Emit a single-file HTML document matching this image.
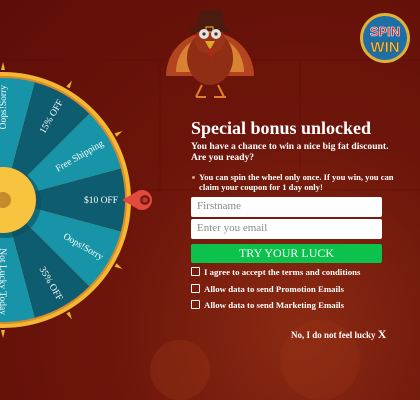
<!DOCTYPE html>
<html><head><meta charset="utf-8"><style>
*{margin:0;padding:0;box-sizing:border-box}
html,body{width:420px;height:400px;overflow:hidden}
body{position:relative;font-family:"Liberation Serif",serif;
background:radial-gradient(ellipse at 300px 330px,#8a2a12 0%,#6d150b 45%,#5e0e07 100%);color:#fff}
.abs{position:absolute}
h1{position:absolute;left:191px;top:118px;font-size:18px;font-weight:bold;white-space:nowrap}
.sub{left:191px;top:141px;font-size:9.6px;font-weight:bold;line-height:11px;white-space:nowrap}
.note{left:199px;top:172px;font-size:8.6px;font-weight:bold;line-height:10px;width:195px}
.note:before{content:"";position:absolute;left:-7px;top:4px;width:3px;height:3px;border-radius:50%;background:#d9a08a}
.inp{left:191px;width:191px;height:20px;background:#fff;border-radius:2px;color:#8a8a8a;font-size:11px;padding:3px 6px}
.btn{left:191px;top:244px;width:191px;height:19px;background:#0cc24d;border-radius:2px;text-align:center;font-size:12px;line-height:19px;color:#fff}
.cb{left:191px;font-size:8.8px;font-weight:bold;white-space:nowrap}
.cb i{display:inline-block;width:9px;height:9px;border:1.3px solid #fff;border-radius:1px;vertical-align:-1px;margin-right:4px}
.no{left:291px;top:327px;font-size:9px;font-weight:bold;white-space:nowrap}
</style></head><body>
<svg class="abs" style="left:0;top:0;display:block" width="420" height="400">
<g stroke="#5a0c06" stroke-width="1" opacity=".5" fill="none">
<path d="M0 60H420M0 190H420M160 60V190M300 60V190"/></g>
<circle cx="320" cy="360" r="40" fill="#9a3416" opacity=".35"/>
<circle cx="180" cy="370" r="30" fill="#a03a18" opacity=".3"/>
<g transform="translate(210,48)">
<path d="M-44 28 A44 44 0 0 1 44 28 Z" fill="#b4441f"/>
<path d="M-34 24 A34 36 0 0 1 34 24 Z" fill="#d88232"/>
<ellipse cx="0" cy="10" rx="23" ry="27" fill="#8f2d15"/>
<ellipse cx="0" cy="-8" rx="15" ry="14" fill="#9a3418"/>
<path d="M-15 -18 L15 -18 L12 -38 L-9 -38 Z" fill="#4a1c10"/>
<rect x="-20" y="-20" width="40" height="4" fill="#4a1c10"/>
<rect x="-4" y="-21" width="7" height="5" fill="none" stroke="#d9a22c" stroke-width="1.2"/>
<circle cx="-6" cy="-14" r="5" fill="#e8e0dc"/><circle cx="6" cy="-14" r="5" fill="#e8e0dc"/>
<circle cx="-6" cy="-14" r="1.6" fill="#333"/><circle cx="6" cy="-14" r="1.6" fill="#333"/>
<path d="M-5 -7 L5 -7 L0 2Z" fill="#e0a426"/><path d="M1 0 q3 6 1 10 q-3 -3 -3 -9z" fill="#c41e1e"/>
<path d="M-8 37 l-6 12 M8 37 l6 12 M-14 49 h10 M4 49 h12" stroke="#e07e2a" stroke-width="2"/>
</g>
<g transform="translate(385,38)">
<circle r="25" fill="#e0b237"/><circle r="22" fill="#1d6fa6"/>
<text x="0" y="-2" text-anchor="middle" font-family="Liberation Sans" font-weight="bold" font-size="13" fill="#d92a22" stroke="#fff" stroke-width=".5">SPIN</text>
<text x="0" y="14" text-anchor="middle" font-family="Liberation Sans" font-weight="bold" font-size="15" fill="#e8c15a" stroke="#6a4a10" stroke-width=".5">WIN</text>
</g>
<g transform="translate(3,200)">
<circle r="128" fill="#f3b733"/>
<circle r="124" fill="#d88a2a"/>
<circle r="121" fill="#f5bd38"/>
<path d="M0 0 L117.8 -31.6 A122 122 0 0 1 117.8 31.6Z" fill="#0e5c70"/>
<path d="M0 0 L117.8 31.6 A122 122 0 0 1 86.3 86.3Z" fill="#1894a8"/>
<path d="M0 0 L86.3 86.3 A122 122 0 0 1 31.6 117.8Z" fill="#0e5c70"/>
<path d="M0 0 L31.6 117.8 A122 122 0 0 1 -31.6 117.8Z" fill="#1894a8"/>
<path d="M0 0 L117.8 -31.6 A122 122 0 0 0 86.3 -86.3Z" fill="#1894a8"/>
<path d="M0 0 L86.3 -86.3 A122 122 0 0 0 31.6 -117.8Z" fill="#0e5c70"/>
<path d="M0 0 L31.6 -117.8 A122 122 0 0 0 -31.6 -117.8Z" fill="#1894a8"/>
<g font-family="Liberation Serif" font-size="9.5" fill="#fff" text-anchor="end">
<text x="115" y="3">$10 OFF</text>
<text transform="rotate(-30)" x="115" y="3">Free Shipping</text>
<text transform="rotate(-60)" x="115" y="3">15% OFF</text>
<text transform="rotate(-90)" x="115" y="3">Oops!Sorry</text>
<text transform="rotate(30)" x="115" y="3">Oops!Sorry</text>
<text transform="rotate(60)" x="115" y="3">35% OFF</text>
<text transform="rotate(90)" x="115" y="3">Not Lucky Today</text>
</g>
<circle r="35" fill="#0b4c5c" opacity=".6" transform="translate(3,3)"/>
<circle r="33" fill="#f8c43f"/>
<circle r="8" fill="#c48b2b"/>
<g fill="#e8b32e">
<path d="M130 -2 l8 2 -8 2z" transform="rotate(-30)"/>
<path d="M130 -2 l8 2 -8 2z" transform="rotate(-60)"/>
<path d="M130 -2 l8 2 -8 2z" transform="rotate(-90)"/>
<path d="M130 -2 l8 2 -8 2z" transform="rotate(30)"/>
<path d="M130 -2 l8 2 -8 2z" transform="rotate(60)"/>
<path d="M130 -2 l8 2 -8 2z" transform="rotate(90)"/>
</g>
</g>
<path d="M122 200 L136 192 A10 10 0 1 1 136 208 Z" fill="#e24a3d"/>
<circle cx="145" cy="200" r="5" fill="#7a1a14"/><circle cx="145" cy="200" r="2.5" fill="#c23a2e"/>
</svg>
<h1>Special bonus unlocked</h1>
<div class="abs sub">You have a chance to win a nice big fat discount.<br>Are you ready?</div>
<div class="abs note">You can spin the wheel only once. If you win, you can claim your coupon for 1 day only!</div>
<div class="abs inp" style="top:197px">Firstname</div>
<div class="abs inp" style="top:219px">Enter you email</div>
<div class="abs btn">TRY YOUR LUCK</div>
<div class="abs cb" style="top:267px"><i></i>I agree to accept the terms and conditions</div>
<div class="abs cb" style="top:284px"><i></i>Allow data to send Promotion Emails</div>
<div class="abs cb" style="top:300px"><i></i>Allow data to send Marketing Emails</div>
<div class="abs no">No, I do not feel lucky <span style="font-size:12px">X</span></div>
</body></html>
